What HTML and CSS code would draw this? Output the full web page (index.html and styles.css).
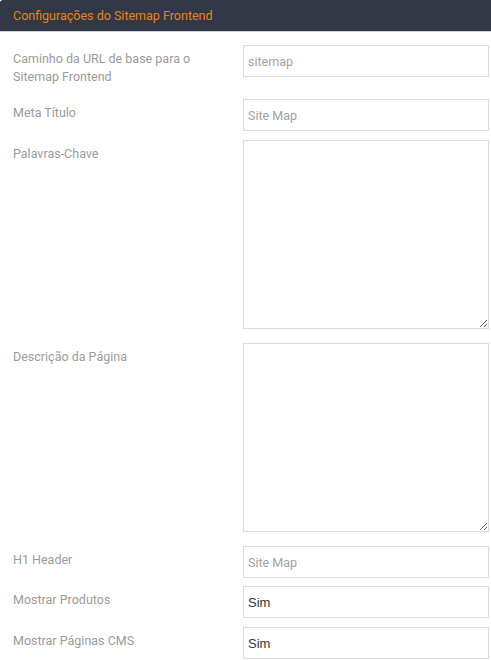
FILE: index.html
```html
<!DOCTYPE html>
<html>
<head>
    <meta charset="utf-8" />
    <title>Configurações do Sitemap Frontend</title>
    <meta name="viewport" content="width=device-width, initial-scale=1">
    <link rel="stylesheet" href="styles.css">
</head>
<body>
    <div class="panel">
        <div class="panel-head">Configurações do Sitemap Frontend</div>
        <div class="panel-body">
            <div class="row">
                <label class="label">Caminho da URL de base para o Sitemap Frontend</label>
                <div class="field"><input class="input" type="text" value="sitemap"></div>
            </div>
            <div class="row">
                <label class="label">Meta Título</label>
                <div class="field"><input class="input" type="text" value="Site Map"></div>
            </div>
            <div class="row row-area">
                <label class="label">Palavras-Chave</label>
                <div class="field"><textarea class="area"></textarea></div>
            </div>
            <div class="row row-area">
                <label class="label">Descrição da Página</label>
                <div class="field"><textarea class="area"></textarea></div>
            </div>
            <div class="row row-tight">
                <label class="label">H1 Header</label>
                <div class="field"><input class="input" type="text" value="Site Map"></div>
            </div>
            <div class="row">
                <label class="label">Mostrar Produtos</label>
                <div class="field">
                    <select class="select">
                        <option>Sim</option>
                        <option>Não</option>
                    </select>
                </div>
            </div>
            <div class="row">
                <label class="label">Mostrar Páginas CMS</label>
                <div class="field">
                    <select class="select">
                        <option>Sim</option>
                        <option>Não</option>
                    </select>
                </div>
            </div>
        </div>
    </div>
</body>
</html>
```

FILE: styles.css
```css
*{
    margin: 0;
    padding: 0;
    box-sizing: border-box;
}
body{
    background: #fff;
    font-family: Roboto, "Liberation Sans", sans-serif;
    font-size: 12.5px;
}
.panel-head{
    height: 32px;
    line-height: 31px;
    padding-left: 13px;
    background: #323846;
    color: #e5841e;
    border-bottom: 1px solid #c9d0dc;
    border-top-left-radius: 3px;
}
.panel-body{
    padding: 13px 2px 0 13px;
}
.row{
    display: flex;
    margin-bottom: 9px;
}
.row-area{
    margin-bottom: 14px;
}
.row-tight{
    margin-bottom: 8px;
}
.label{
    width: 230px;
    padding: 5px 20px 5px 0;
    line-height: 17.5px;
    color: #9b9b9b;
}
.field{
    flex: 1;
}
.input,
.select,
.area{
    display: block;
    width: 100%;
    height: 32px;
    padding: 0 4px;
    border: 1px solid #dadade;
    background: #fff;
    font-family: Roboto, "Liberation Sans", sans-serif;
    font-size: 12.5px;
    color: #a2a2a2;
    outline: none;
}
.area{
    height: 189px;
}
.select{
    -webkit-appearance: none;
    appearance: none;
    padding-left: 4px;
    font-family: "Liberation Sans", Arial, sans-serif;
    font-size: 13px;
    color: #333;
    border-radius: 0;
}
```
